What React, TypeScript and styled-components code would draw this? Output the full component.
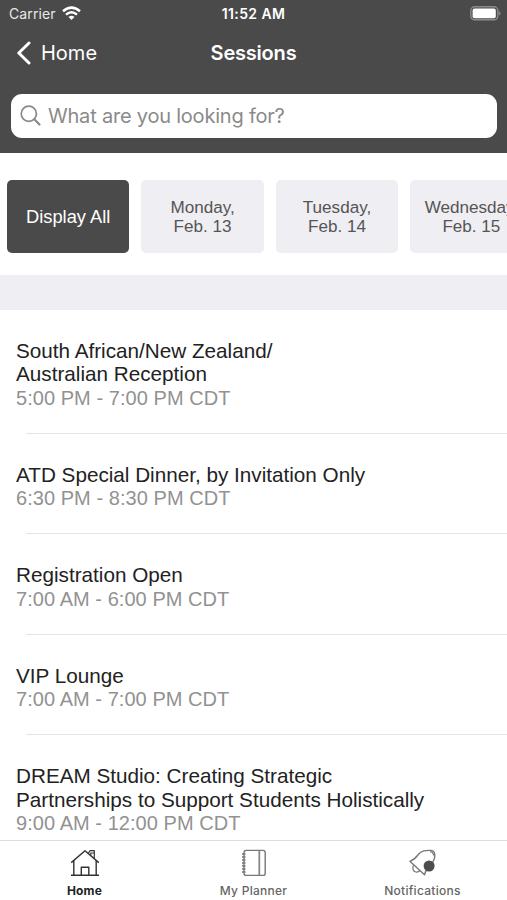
import React from "react";
import styled, { createGlobalStyle } from "styled-components";

const sans = `"Liberation Sans", Arial, sans-serif`;
const ui = `Inter, "Liberation Sans", sans-serif`;

const GlobalStyle = createGlobalStyle`
  * { box-sizing: border-box; }
  body { margin: 0; background: #fff; overflow: hidden; }
  svg { display: block; flex: none; }
`;

const Screen = styled.div`
  width: 507px;
  height: 900px;
  display: flex;
  flex-direction: column;
  overflow: hidden;
  background: #fff;
  font-family: ${sans};
`;

const Header = styled.header`
  flex: none;
  height: 152.5px;
  background: #4a4a4a;
  color: #fff;
  font-family: ${ui};
`;

const StatusBar = styled.div`
  display: grid;
  grid-template-columns: 1fr auto 1fr;
  align-items: center;
  height: 27px;
  padding: 0 6px 0 9px;
`;

const Carrier = styled.div`
  display: flex;
  align-items: center;
  gap: 6px;
  font-size: 14px;
  letter-spacing: 0.1px;
  color: #e8e8e8;
`;

const Clock = styled.div`
  font-size: 14px;
  font-weight: 600;
  letter-spacing: 0.4px;
  margin-right: 3px;
`;

const BatterySlot = styled.div`
  display: flex;
  justify-content: flex-end;
`;

const NavBar = styled.nav`
  display: grid;
  grid-template-columns: 1fr auto 1fr;
  align-items: center;
  height: 51px;
  padding: 0 16px;
`;

const Back = styled.div`
  display: flex;
  align-items: center;
  gap: 9px;
  font-size: 20px;
`;

const Heading = styled.h1`
  margin: 0;
  font-size: 20px;
  font-weight: 600;
  letter-spacing: -0.2px;
`;

const Search = styled.div`
  display: flex;
  align-items: center;
  gap: 6px;
  height: 43.5px;
  margin: 16px 10px 0 11px;
  padding-left: 9px;
  border-radius: 11px;
  background: #fff;
  color: #8a8a8a;
  font-size: 20px;
  letter-spacing: -0.21px;
  white-space: nowrap;
`;

const Days = styled.div`
  flex: none;
  display: flex;
  gap: 12px;
  height: 122px;
  padding: 27.5px 0 21.5px 7px;
  overflow: hidden;
`;

const Day = styled.div<{ $active?: boolean }>`
  flex: none;
  display: flex;
  align-items: center;
  justify-content: center;
  width: 122.4px;
  padding-top: 1px;
  border-radius: 5px;
  background: ${(p) => (p.$active ? "#4a4a4a" : "#efeef3")};
  color: ${(p) => (p.$active ? "#fff" : "#555")};
  font-size: ${(p) => (p.$active ? 18.3 : 17.1)}px;
  line-height: 19.5px;
  text-align: center;
  white-space: pre;
`;

const Band = styled.div`
  flex: none;
  height: 35.5px;
  background: #efeef3;
`;

const List = styled.main`
  flex: 1;
  min-height: 0;
  overflow: hidden;
`;

const Session = styled.article`
  padding: 28.7px 16px 22.5px;
  font-size: 20px;
  line-height: 23.7px;
  white-space: pre;
`;

const Title = styled.div`
  margin-bottom: 0.8px;
  color: #222;
  font-size: 20.7px;
`;

const Time = styled.div`
  color: #929292;
  letter-spacing: 0.05px;
`;

const Divider = styled.div`
  height: 1px;
  margin-left: 26px;
  background: #e4e4e4;
`;

const TabBar = styled.footer`
  flex: none;
  display: grid;
  grid-template-columns: repeat(3, 1fr);
  height: 60.5px;
  border-top: 1px solid #dedede;
  background: #fff;
  font-family: ${ui};
`;

const Tab = styled.div<{ $active?: boolean }>`
  display: flex;
  flex-direction: column;
  align-items: center;
  gap: 5px;
  padding-top: 7px;
  color: ${(p) => (p.$active ? "#222" : "#666")};
  font-size: 12px;
  line-height: 16px;
  font-weight: ${(p) => (p.$active ? 700 : 500)};
  letter-spacing: ${(p) => (p.$active ? 0.15 : 0.28)}px;
`;

const Wifi = () => (
  <svg width="19" height="15" viewBox="0 0 19 15" fill="none" stroke="#fff" strokeWidth="2.5">
    <path d="M1 5.2 Q9.5 -2 18 5.2" />
    <path d="M4 8.6 Q9.5 4 15 8.6" />
    <path d="M9.5 14 L6.5 11 Q9.5 8.5 12.5 11 Z" fill="#fff" stroke="none" />
  </svg>
);

const Battery = () => (
  <svg width="31" height="15" viewBox="0 0 31 15">
    <rect x="0.8" y="0.8" width="27" height="13" rx="3.8" fill="none" stroke="#8b8b8b" strokeWidth="1.4" />
    <rect x="2.6" y="2.6" width="23.2" height="9.6" rx="1.8" fill="#fff" />
    <path d="M29 5 Q32 7.3 29 9.6 Z" fill="#8b8b8b" />
  </svg>
);

const Chevron = () => (
  <svg width="16" height="24" viewBox="0 0 16 24" fill="none" stroke="#fff" strokeWidth="3" strokeLinecap="round" strokeLinejoin="round">
    <path d="M13 2 L2.8 12 L13 22" />
  </svg>
);

const Magnifier = () => (
  <svg width="22" height="22" viewBox="0 0 22 22" fill="none" stroke="#8a8a8a" strokeWidth="1.7" strokeLinecap="round">
    <circle cx="8.8" cy="8.8" r="7.6" />
    <path d="M14.3 14.3 L19.5 19.5" strokeWidth="2.2" />
  </svg>
);

const HouseIcon = () => (
  <svg width="30" height="30" viewBox="0 0 30 30" fill="none" stroke="#333" strokeWidth="1.4" strokeLinejoin="round">
    <path d="M1.2 14.6 L15 2.8 L28.8 14.6" />
    <path d="M3.8 12.6 V27.3 M26.2 12.6 V27.3 M1 27.3 H29" />
    <path d="M11.3 27 V19.3 H18.8 V27" />
    <path d="M18.3 5.4 L20 2.7 H24.3 V10.4 M20.8 7.4 V5 H24.2" strokeWidth="1.2" />
  </svg>
);

const PlannerIcon = () => (
  <svg width="30" height="30" viewBox="0 0 30 30" fill="none" stroke="#777" strokeWidth="1.4">
    <rect x="5" y="2.4" width="21.2" height="25" rx="2.2" />
    <path d="M20.3 2.5 V27.3" strokeWidth="1.8" stroke="#888" />
    <path d="M3 6 H6.5 M3 9 H6.5 M3 12 H6.5 M3 15 H6.5 M3 18 H6.5 M3 21 H6.5 M3 24 H6.5" strokeWidth="1.5" />
  </svg>
);

const BellIcon = () => (
  <svg width="30" height="30" viewBox="0 0 30 30" fill="none" stroke="#777" strokeWidth="1.4" strokeLinejoin="round">
    <path d="M1.9 13.3 C6.5 11.8 8 9.5 10 6.8 C13.5 2.4 17.5 2.2 23 2.4 C26 2.6 26.9 4.5 26.8 8 C26.7 13 24 16 20 20 C18 22 17 24 16.5 26.8 Z" />
    <path d="M5.6 17 C3.8 20.2 5.2 23.5 7.8 24 C9.5 24.3 11 23.7 12 22.5" strokeWidth="1.2" />
    <path d="M22 3.6 Q25.4 4 25.6 7.5" strokeWidth="1.2" />
    <circle cx="21.1" cy="18" r="5.5" fill="#4d4d4d" stroke="none" />
  </svg>
);

const days = ["Monday,\nFeb. 13", "Tuesday,\nFeb. 14", "Wednesday,\nFeb. 15"];

const sessions = [
  { title: "South African/New Zealand/\nAustralian Reception", time: "5:00 PM - 7:00 PM CDT" },
  { title: "ATD Special Dinner, by Invitation Only", time: "6:30 PM - 8:30 PM CDT" },
  { title: "Registration Open", time: "7:00 AM - 6:00 PM CDT" },
  { title: "VIP Lounge", time: "7:00 AM - 7:00 PM CDT" },
  {
    title: "DREAM Studio: Creating Strategic\nPartnerships to Support Students Holistically",
    time: "9:00 AM - 12:00 PM CDT",
  },
];

export default function App() {
  return (
    <>
      <GlobalStyle />
      <Screen>
        <Header>
          <StatusBar>
            <Carrier>
              Carrier <Wifi />
            </Carrier>
            <Clock>11:52 AM</Clock>
            <BatterySlot>
              <Battery />
            </BatterySlot>
          </StatusBar>
          <NavBar>
            <Back>
              <Chevron />
              Home
            </Back>
            <Heading>Sessions</Heading>
          </NavBar>
          <Search>
            <Magnifier />
            What are you looking for?
          </Search>
        </Header>
        <Days>
          <Day $active>Display All</Day>
          {days.map((day) => (
            <Day key={day}>{day}</Day>
          ))}
        </Days>
        <Band />
        <List>
          {sessions.map((s) => (
            <React.Fragment key={s.title}>
              <Session>
                <Title>{s.title}</Title>
                <Time>{s.time}</Time>
              </Session>
              <Divider />
            </React.Fragment>
          ))}
        </List>
        <TabBar>
          <Tab $active>
            <HouseIcon />
            Home
          </Tab>
          <Tab>
            <PlannerIcon />
            My Planner
          </Tab>
          <Tab>
            <BellIcon />
            Notifications
          </Tab>
        </TabBar>
      </Screen>
    </>
  );
}
